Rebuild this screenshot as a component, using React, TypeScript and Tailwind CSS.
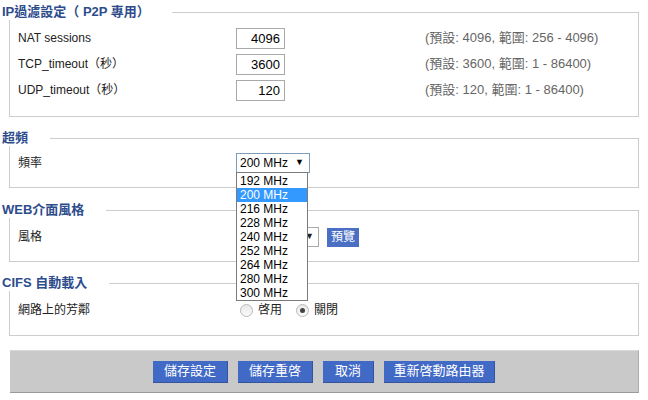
import React from "react";

const font = { fontFamily: '"Liberation Sans", "Noto Sans CJK TC", sans-serif' };

function Section({ title, children, boxClass }: { title: string; children: React.ReactNode; boxClass: string }) {
  return (
    <div className="pl-[2px] w-[639px]">
      <div className="flex h-[16px]">
        <div className="pr-[22px] text-[13px] font-bold leading-[16px] text-[#2d4c8c]">{title}</div>
        <div className="flex-1 self-end h-[8px] border-t border-r border-[#cdcdcd]" />
      </div>
      <div className={`ml-[7px] border-l border-r border-b border-[#cdcdcd] pl-[8px] ${boxClass}`}>{children}</div>
    </div>
  );
}

function NumRow({ label, value, hint }: { label: string; value: string; hint: string }) {
  return (
    <div className="flex items-center h-[26px] text-[12px] text-[#222]">
      <div className="w-[218px]">{label}</div>
      <div className="w-[49px] h-[21px] border border-[#a9a9a9] text-right pr-[4px] text-[13px] leading-[19px] text-black">{value}</div>
      <div className="ml-[140px] text-[13px] text-[#666]">{hint}</div>
    </div>
  );
}

const freqs = ["192 MHz", "200 MHz", "216 MHz", "228 MHz", "240 MHz", "252 MHz", "264 MHz", "280 MHz", "300 MHz"];

function Radio({ checked }: { checked?: boolean }) {
  return (
    <span className="w-[13px] h-[13px] rounded-full border border-[#b8b8b8] bg-gradient-to-b from-[#e8e8e8] to-[#fafafa] flex items-center justify-center">
      {checked && <span className="w-[5px] h-[5px] rounded-full bg-[#444]" />}
    </span>
  );
}

export default function App() {
  const buttons = [
    { t: "儲存設定", w: "w-[75px]" },
    { t: "儲存重啓", w: "w-[75px]" },
    { t: "取消", w: "w-[51px]" },
    { t: "重新啓動路由器", w: "w-[111px]" },
  ];
  return (
    <div className="w-[648px] h-[400px] bg-white pt-[4px] overflow-hidden" style={font}>
      <Section title="IP過濾設定（ P2P 專用）" boxClass="pt-[5px] pb-[13px]">
        <NumRow label="NAT sessions" value="4096" hint="(預設: 4096, 範圍: 256 - 4096)" />
        <NumRow label="TCP_timeout（秒）" value="3600" hint="(預設: 3600, 範圍: 1 - 86400)" />
        <NumRow label="UDP_timeout（秒）" value="120" hint="(預設: 120, 範圍: 1 - 86400)" />
      </Section>

      <div className="mt-[13px]">
        <Section title="超頻" boxClass="pt-[4px] pb-[11px]">
          <div className="flex items-center h-[26px] text-[12px] text-[#222]">
            <div className="w-[218px]">頻率</div>
            <div className="relative">
              <div className="w-[74px] h-[20px] border border-[#7f9db9] flex items-center justify-between pl-[3px] pr-[5px] text-[12px] text-black bg-white">
                <span>200 MHz</span>
                <span className="text-[9px]">▼</span>
              </div>
              <div className="absolute left-0 top-[19px] w-[72px] border border-[#7a7a7a] bg-white z-10 pt-[1px]">
                {freqs.map((f) => (
                  <div
                    key={f}
                    className={`h-[14px] leading-[14px] pl-[3px] text-[12px] ${f === "200 MHz" ? "bg-[#3399ff] text-white" : "text-black"}`}
                  >
                    {f}
                  </div>
                ))}
              </div>
            </div>
          </div>
        </Section>
      </div>

      <div className="mt-[14px]">
        <Section title="WEB介面風格" boxClass="pt-[6px] pb-[11px]">
          <div className="flex items-center h-[26px] text-[12px] text-[#222]">
            <div className="w-[218px]">風格</div>
            <div className="w-[83px] h-[20px] border border-[#a9a9a9] flex items-center justify-end pr-[4px] bg-white">
              <span className="text-[9px]">▼</span>
            </div>
            <div className="ml-[8px] w-[32px] h-[19px] bg-[#4a6fc4] text-white text-[12px] flex items-center justify-center">預覽</div>
          </div>
        </Section>
      </div>

      <div className="mt-[13px]">
        <Section title="CIFS 自動載入" boxClass="pt-[6px] pb-[12px]">
          <div className="flex items-center h-[26px] text-[12px] text-[#222]">
            <div className="w-[222px]">網路上的芳鄰</div>
            <div className="flex items-center gap-[5px]">
              <Radio />
              <span>啓用</span>
            </div>
            <div className="flex items-center gap-[5px] ml-[14px]">
              <Radio checked />
              <span>關閉</span>
            </div>
          </div>
        </Section>
      </div>

      <div className="mt-[14px] ml-[10px] w-[629px] h-[43px] bg-[#c9c9c9] border-t border-[#d8d8d8] border-b border-r border-b-[#9a9a9a] border-r-[#ababab] flex items-center justify-center gap-[10px]">
        {buttons.map((b) => (
          <div
            key={b.t}
            className={`${b.w} h-[22px] bg-[#4169c6] border-b border-r border-[#34549c] text-white text-[13px] flex items-center justify-center`}
          >
            {b.t}
          </div>
        ))}
      </div>
    </div>
  );
}
